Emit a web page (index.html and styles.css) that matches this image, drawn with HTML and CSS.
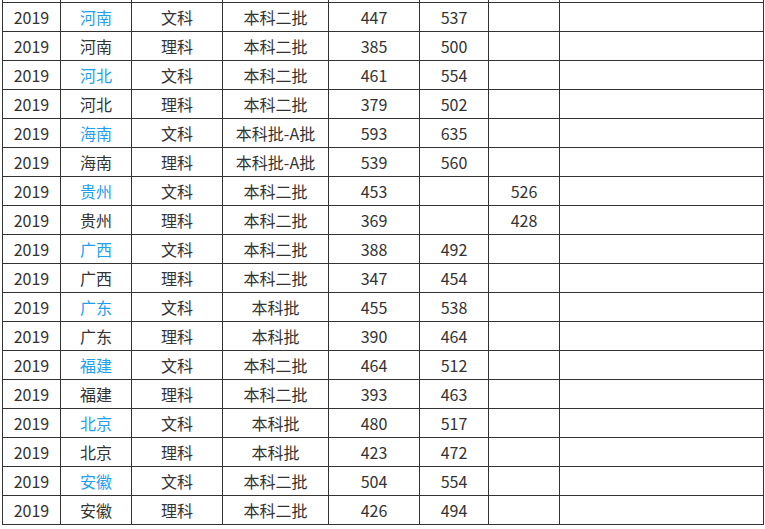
FILE: index.html
```html
<!DOCTYPE html>
<html lang="zh">
<head>
<meta charset="utf-8">
<link rel="stylesheet" href="styles.css">
</head>
<body>
<div class="wrap">
<table class="score">
<colgroup>
<col class="c1"><col class="c2"><col class="c3"><col class="c4"><col class="c5"><col class="c6"><col class="c7"><col class="c8">
</colgroup>
<tbody>
<tr class="cut"><td></td><td></td><td></td><td></td><td></td><td></td><td></td><td></td></tr>
<tr><td>2019</td><td class="link">河南</td><td>文科</td><td>本科二批</td><td>447</td><td>537</td><td></td><td></td></tr>
<tr><td>2019</td><td>河南</td><td>理科</td><td>本科二批</td><td>385</td><td>500</td><td></td><td></td></tr>
<tr><td>2019</td><td class="link">河北</td><td>文科</td><td>本科二批</td><td>461</td><td>554</td><td></td><td></td></tr>
<tr><td>2019</td><td>河北</td><td>理科</td><td>本科二批</td><td>379</td><td>502</td><td></td><td></td></tr>
<tr><td>2019</td><td class="link">海南</td><td>文科</td><td>本科批-A批</td><td>593</td><td>635</td><td></td><td></td></tr>
<tr><td>2019</td><td>海南</td><td>理科</td><td>本科批-A批</td><td>539</td><td>560</td><td></td><td></td></tr>
<tr><td>2019</td><td class="link">贵州</td><td>文科</td><td>本科二批</td><td>453</td><td></td><td>526</td><td></td></tr>
<tr><td>2019</td><td>贵州</td><td>理科</td><td>本科二批</td><td>369</td><td></td><td>428</td><td></td></tr>
<tr><td>2019</td><td class="link">广西</td><td>文科</td><td>本科二批</td><td>388</td><td>492</td><td></td><td></td></tr>
<tr><td>2019</td><td>广西</td><td>理科</td><td>本科二批</td><td>347</td><td>454</td><td></td><td></td></tr>
<tr><td>2019</td><td class="link">广东</td><td>文科</td><td>本科批</td><td>455</td><td>538</td><td></td><td></td></tr>
<tr><td>2019</td><td>广东</td><td>理科</td><td>本科批</td><td>390</td><td>464</td><td></td><td></td></tr>
<tr><td>2019</td><td class="link">福建</td><td>文科</td><td>本科二批</td><td>464</td><td>512</td><td></td><td></td></tr>
<tr><td>2019</td><td>福建</td><td>理科</td><td>本科二批</td><td>393</td><td>463</td><td></td><td></td></tr>
<tr><td>2019</td><td class="link">北京</td><td>文科</td><td>本科批</td><td>480</td><td>517</td><td></td><td></td></tr>
<tr><td>2019</td><td>北京</td><td>理科</td><td>本科批</td><td>423</td><td>472</td><td></td><td></td></tr>
<tr><td>2019</td><td class="link">安徽</td><td>文科</td><td>本科二批</td><td>504</td><td>554</td><td></td><td></td></tr>
<tr><td>2019</td><td>安徽</td><td>理科</td><td>本科二批</td><td>426</td><td>494</td><td></td><td></td></tr>
</tbody>
</table>
</div>
</body>
</html>
```

FILE: styles.css
```css
html, body {
  margin: 0;
  padding: 0;
  background: #ffffff;
}
.wrap {
  padding-left: 2px;
}
.score {
  border-collapse: collapse;
  table-layout: fixed;
  width: 761px;
  font-family: "Noto Sans CJK SC", "Noto Sans", sans-serif;
  font-size: 16px;
  color: #333333;
}
.c1 { width: 58px; }
.c2 { width: 71px; }
.c3 { width: 91px; }
.c4 { width: 106px; }
.c5 { width: 91px; }
.c6 { width: 69px; }
.c7 { width: 71px; }
.c8 { width: 204px; }
.score td {
  border: 1px solid #333333;
  padding: 0;
  height: 28px;
  text-align: center;
  vertical-align: middle;
  line-height: 20px;
  white-space: nowrap;
}
.score tr.cut td {
  border-top: none;
  height: 2px;
}
.score td.link {
  color: #1fa0f0;
}
```
